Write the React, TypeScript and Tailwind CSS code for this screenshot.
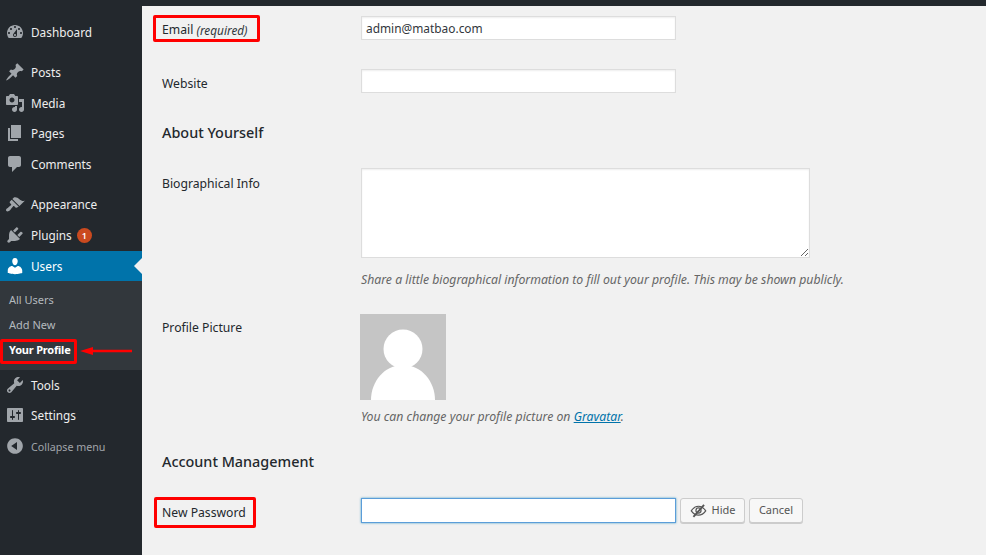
const font = "font-['Noto_Sans',sans-serif]";

function Dash({ d, className }: { d: string; className?: string }) {
  return (
    <svg viewBox="0 0 20 20" className={className ?? "h-5 w-5 fill-[#a0a5aa]"}>
      <path d={d} />
    </svg>
  );
}

const icons = {
  dashboard:
    "M3.76 16h12.48c1.1-1.37 1.76-3.11 1.76-5 0-4.42-3.58-8-8-8s-8 3.58-8 8c0 1.89.66 3.63 1.76 5zM10 4c.55 0 1 .45 1 1s-.45 1-1 1-1-.45-1-1 .45-1 1-1zM6 6c.55 0 1 .45 1 1s-.45 1-1 1-1-.45-1-1 .45-1 1-1zm8 0c.55 0 1 .45 1 1s-.45 1-1 1-1-.45-1-1 .45-1 1-1zm-5.37 5.55L12 7v6c0 1.1-.9 2-2 2s-2-.9-2-2c0-.57.24-1.08.63-1.45zM4 10c.55 0 1 .45 1 1s-.45 1-1 1-1-.45-1-1 .45-1 1-1zm12 0c.55 0 1 .45 1 1s-.45 1-1 1-1-.45-1-1 .45-1 1-1zm-5 3c0-.55-.45-1-1-1s-1 .45-1 1 .45 1 1 1 1-.45 1-1z",
  posts:
    "M10.44 3.02l1.82-1.82 6.36 6.35-1.83 1.82c-1.05-.68-2.48-.57-3.41.36l-.75.75c-.92.93-1.04 2.35-.35 3.41l-1.83 1.82-2.41-2.41-2.8 2.79c-.42.42-3.38 2.71-3.8 2.29s1.86-3.39 2.28-3.81l2.79-2.79L4.1 9.36l1.83-1.82c1.05.69 2.48.57 3.4-.36l.75-.75c.93-.92 1.05-2.35.36-3.41z",
  media:
    "M13 11V4c0-.55-.45-1-1-1h-1.67L9 1H5L3.67 3H2c-.55 0-1 .45-1 1v7c0 .55.45 1 1 1h10c.55 0 1-.45 1-1zM7 4.5c1.38 0 2.5 1.12 2.5 2.5S8.38 9.5 7 9.5 4.5 8.38 4.5 7 5.62 4.5 7 4.5zM14 6h5v10.5c0 1.38-1.12 2.5-2.5 2.5S14 17.88 14 16.5s1.12-2.5 2.5-2.5c.17 0 .34.02.5.05V9h-3V6zm-4 8.05V13h2v3.5c0 1.38-1.12 2.5-2.5 2.5S7 17.88 7 16.5 8.12 14 9.5 14c.17 0 .34.02.5.05z",
  pages: "M6 15V2h10v13H6zm-1 1h8v2H3V5h2v11z",
  comments:
    "M5 2h9c1.1 0 2 .9 2 2v7c0 1.1-.9 2-2 2h-2l-5 5v-5H5c-1.1 0-2-.9-2-2V4c0-1.1.9-2 2-2z",
  appearance:
    "M14.48 11.06L7.41 3.99l1.5-1.5c.5-.56 2.3-.47 3.51.32 1.21.8 1.43 1.28 2.91 2.1 1.18.64 2.45 1.26 4.45.85zm-.71.71L6.7 4.7 4.93 6.47c-.39.39-.39 1.02 0 1.41l1.06 1.06c.39.39.39 1.03 0 1.42-.6.6-1.43 1.11-2.21 1.69-.35.26-.7.53-1.01.84C1.43 13.23.4 14.99 1.4 15.99c.99 1 2.76-.04 4.09-1.36.31-.31.58-.66.85-1.02.57-.78 1.08-1.61 1.69-2.21.39-.39 1.02-.39 1.41 0l1.06 1.06c.39.39 1.02.39 1.41 0z",
  plugins:
    "M13.11 4.36L9.87 7.6 8 5.73l3.24-3.24c.35-.34 1.05-.2 1.56.32.52.51.66 1.21.31 1.55zm-8 1.77l.91-1.12 9.01 9.01-1.19.84c-.71.71-2.63 1.16-3.82 1.16H6.14L4.9 17.26c-.59.59-1.54.59-2.12 0-.59-.58-.59-1.53 0-2.12l1.24-1.24v-3.88c0-1.13.4-3.19 1.09-3.89zm7.26 3.97l3.24-3.24c.34-.35 1.04-.21 1.55.31.52.51.66 1.21.31 1.55l-3.24 3.25z",
  users:
    "M10 9.25c-2.27 0-2.73-3.44-2.73-3.44C7 4.02 7.82 2 9.97 2c2.16 0 2.98 2.02 2.71 3.81 0 0-.41 3.44-2.68 3.44zm0 2.57L12.72 10c2.39 0 4.52 2.33 4.52 4.53v2.49s-3.65 1.13-7.24 1.13c-3.65 0-7.24-1.13-7.24-1.13v-2.49c0-2.25 1.94-4.48 4.47-4.48z",
  tools:
    "M16.68 9.77c-1.34 1.34-3.3 1.67-4.95.99l-5.41 6.52c-.99.99-2.59.99-3.58 0s-.99-2.59 0-3.57l6.52-5.42c-.68-1.65-.35-3.61.99-4.95 1.28-1.28 3.12-1.62 4.72-1.06l-2.89 2.89 2.82 2.82 2.86-2.87c.53 1.58.18 3.39-1.08 4.65zM3.81 16.21c.4.39 1.04.39 1.43 0 .4-.4.4-1.04 0-1.43-.39-.4-1.03-.4-1.43 0-.39.39-.39 1.03 0 1.43z",
  settings:
    "M18 16V4c0-.55-.45-1-1-1H3c-.55 0-1 .45-1 1v12c0 .55.45 1 1 1h14c.55 0 1-.45 1-1zM8 11h1c.55 0 1 .45 1 1s-.45 1-1 1H8v1.5c0 .28-.22.5-.5.5s-.5-.22-.5-.5V13H6c-.55 0-1-.45-1-1s.45-1 1-1h1V5.5c0-.28.22-.5.5-.5s.5.22.5.5V11zm5-2h-1c-.55 0-1-.45-1-1s.45-1 1-1h1V5.5c0-.28.22-.5.5-.5s.5.22.5.5V7h1c.55 0 1 .45 1 1s-.45 1-1 1h-1v5.5c0 .28-.22.5-.5.5s-.5-.22-.5-.5V9z",
  collapse:
    "M10 2.16c4.33 0 7.84 3.51 7.84 7.84s-3.51 7.84-7.84 7.84S2.16 14.33 2.16 10 5.71 2.16 10 2.16zm2 11.72V6.12L6.18 9.97z",
};

function MenuItem({ icon, label, badge }: { icon: string; label: string; badge?: string }) {
  return (
    <div className="flex h-[30.6px] items-center pl-[5px] text-[11.8px] text-[#eee]">
      <Dash d={icon} />
      <span className="ml-[6px] pt-[1px]">{label}</span>
      {badge && (
        <span className="ml-[5px] flex h-[15px] w-[15px] items-center justify-center rounded-full bg-[#ca4a1f] text-[9px] font-semibold text-white">
          {badge}
        </span>
      )}
    </div>
  );
}

function Sidebar() {
  return (
    <aside className="relative flex w-[142px] shrink-0 flex-col bg-[#23282d] pt-[11px]">
      <MenuItem icon={icons.dashboard} label="Dashboard" />
      <div className="h-[9.4px]" />
      <MenuItem icon={icons.posts} label="Posts" />
      <MenuItem icon={icons.media} label="Media" />
      <MenuItem icon={icons.pages} label="Pages" />
      <MenuItem icon={icons.comments} label="Comments" />
      <div className="h-[10px]" />
      <MenuItem icon={icons.appearance} label="Appearance" />
      <MenuItem icon={icons.plugins} label="Plugins" badge="1" />
      <div className="relative flex h-[30px] items-center bg-[#0073aa] pl-[5px] text-[11.8px] text-white">
        <Dash d={icons.users} className="h-5 w-5 fill-white" />
        <span className="ml-[6px] pt-[2px]">Users</span>
        <span className="absolute right-0 top-[7px] border-y-[8px] border-r-[8px] border-y-transparent border-r-[#f1f1f1]" />
      </div>
      <div className="flex h-[89px] flex-col justify-center bg-[#32373c] pl-[9px] pt-[1px] text-[11px] text-[#b4b9be]">
        <div className="flex h-[25px] items-center">All Users</div>
        <div className="flex h-[25px] items-center">Add New</div>
        <div className="flex h-[25px] items-center font-bold tracking-[-0.2px] text-white">Your Profile</div>
      </div>
      <MenuItem icon={icons.tools} label="Tools" />
      <MenuItem icon={icons.settings} label="Settings" />
      <div className="flex h-[30.6px] items-center pl-[5px] text-[10.7px] text-[#a0a5aa]">
        <Dash d={icons.collapse} />
        <span className="ml-[6px] pt-[1px]">Collapse menu</span>
      </div>

      {/* annotation over the menu */}
      <div className="absolute left-0 top-[333px] h-[25px] w-[77px] rounded-[2px] border-[3px] border-[#ff0000]" />
      <svg viewBox="0 0 54 10" className="absolute left-[78px] top-[340px] h-[10px] w-[54px]">
        <path d="M2 5 L15 1 L15 3.8 L54 3.8 L54 6.2 L15 6.2 L15 9 Z" fill="#ff0000" />
      </svg>
    </aside>
  );
}

function Row({ label, className, children }: { label?: React.ReactNode; className?: string; children: React.ReactNode }) {
  return (
    <div className={`flex ${className ?? ""}`}>
      <div className="w-[199px] shrink-0 text-[12.2px] text-[#23282d]">{label}</div>
      {children}
    </div>
  );
}

const inputClass =
  "h-[24px] w-[315px] border border-[#ddd] bg-white px-[4px] text-[11.9px] text-[#32373c] shadow-[inset_0_1px_2px_rgba(0,0,0,0.07)] outline-none";

export default function App() {
  return (
    <div className={`${font} flex h-[555px] w-[986px] flex-col overflow-hidden bg-[#f1f1f1]`}>
      <div className="h-[6px] shrink-0 bg-[#23282d]" />
      <div className="flex min-h-0 flex-1">
        <Sidebar />
        <main className="relative min-w-0 flex-1 pl-[20px] pt-[10px]">
          <Row
            label={
              <div className="flex h-[24px] items-center pt-[5px]">
                Email&nbsp;<span className="text-[11.8px] italic text-[#32373c]">(required)</span>
              </div>
            }
          >
            <input className={inputClass} readOnly value="admin@matbao.com" />
          </Row>
          <Row className="mt-[29px]" label={<div className="flex h-[24px] items-center pt-[7px]">Website</div>}>
            <input className={inputClass} readOnly value="" />
          </Row>
          <h2 className="mt-[30px] h-[20px] text-[14.4px] font-medium leading-[20px] text-[#23282d]">About Yourself</h2>
          <Row className="mt-[25px]" label={<div className="pt-[7px] leading-[18px]">Biographical Info</div>}>
            <div>
              <textarea className="block h-[90px] w-[449px] border border-[#ddd] bg-white shadow-[inset_0_1px_2px_rgba(0,0,0,0.07)] outline-none" readOnly />
              <p className="mt-[13px] h-[18px] text-[12.25px] italic leading-[18px] text-[#666]">
                Share a little biographical information to fill out your profile. This may be shown publicly.
              </p>
            </div>
          </Row>
          <Row className="mt-[25px]" label={<div className="pt-[5px] leading-[18px]">Profile Picture</div>}>
            <div className="-ml-px">
              <svg viewBox="0 0 86 86" className="block h-[86px] w-[86px]">
                <rect width="86" height="86" fill="#c5c5c5" />
                <circle cx="43" cy="35" r="19.5" fill="#fff" />
                <path d="M11 86 C11 68 24 51 43 51 C62 51 75 68 75 86 Z" fill="#fff" />
              </svg>
              <p className="ml-px mt-[8px] h-[18px] text-[12.25px] italic leading-[18px] text-[#666]">
                You can change your profile picture on <span className="text-[#0073aa] underline">Gravatar</span>.
              </p>
            </div>
          </Row>
          <h2 className="mt-[26px] h-[20px] text-[14.4px] font-medium leading-[20px] text-[#23282d]">Account Management</h2>
          <Row className="mt-[26px]" label={<div className="flex h-[25px] items-center pt-[5px]">New Password</div>}>
            <div className="flex items-start gap-[4px]">
              <input className="h-[25px] w-[315px] border border-[#5b9dd9] bg-white shadow-[0_0_2px_rgba(30,140,190,0.8)] outline-none" readOnly />
              <button className="flex h-[25px] w-[65px] items-center justify-center rounded-[3px] border border-[#ccc] bg-[#f7f7f7] text-[11px] text-[#555] shadow-[0_1px_0_#ccc]">
                <svg viewBox="0 0 20 20" className="mr-[5px] h-[17px] w-[17px] fill-none stroke-[#555]">
                  <path d="M1.5 10.5 C4 6.5 7 5 10 5 C13 5 16 6.5 18.5 10.5 C16 14 13 15.5 10 15.5 C7 15.5 4 14 1.5 10.5 Z" strokeWidth="1.4" />
                  <circle cx="10" cy="10" r="3" strokeWidth="1.4" />
                  <path d="M4 17.5 L16.5 3.5" strokeWidth="2.2" />
                </svg>
                Hide
              </button>
              <button className="flex h-[25px] w-[54px] items-center justify-center rounded-[3px] border border-[#ccc] bg-[#f7f7f7] text-[11px] text-[#555] shadow-[0_1px_0_#ccc]">
                Cancel
              </button>
            </div>
          </Row>

          {/* red annotation frames */}
          <div className="absolute left-[11px] top-[9px] h-[27px] w-[107px] rounded-[2px] border-[3px] border-[#ff0000]" />
          <div className="absolute left-[12px] top-[491px] h-[31px] w-[102px] rounded-[2px] border-[3px] border-[#ff0000]" />
        </main>
      </div>
    </div>
  );
}
